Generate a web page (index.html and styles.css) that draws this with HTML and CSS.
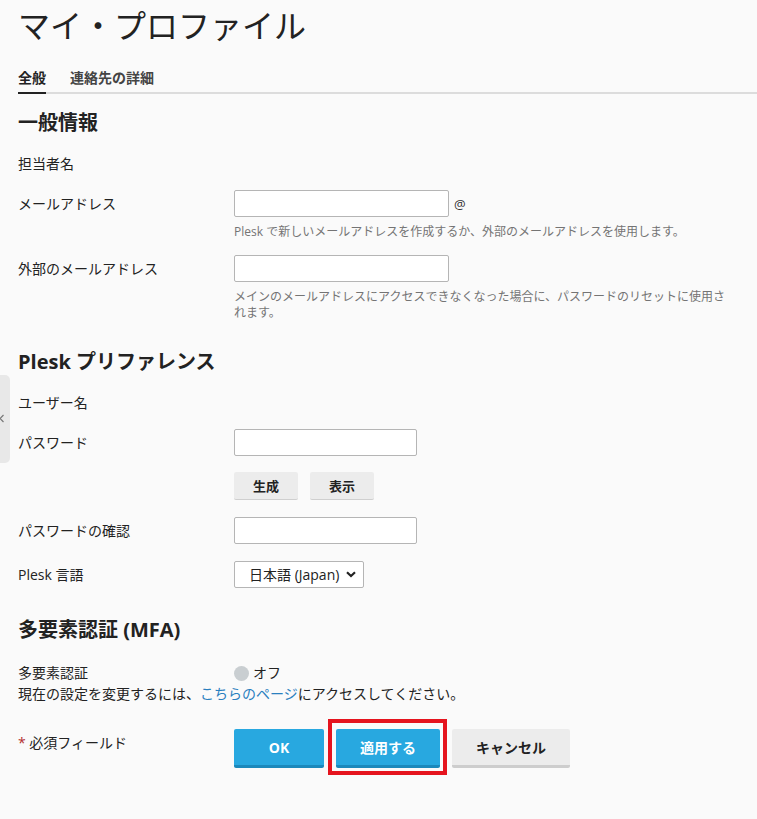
FILE: index.html
```html
<!DOCTYPE html>
<html lang="ja">
<head>
  <meta charset="UTF-8" />
  <meta name="viewport" content="width=device-width, initial-scale=1.0"/>
  <title>マイ・プロファイル</title>
  <link rel="stylesheet" href="styles.css">
</head>
<body>
  <!-- サイドバーのつまみ -->
  <div class="side-handle">
    <svg class="handle-arrow" width="6" height="9" viewBox="0 0 6 9">
      <path d="M4.5 1 L1 4.5 L4.5 8" fill="none" stroke="#777" stroke-width="1.2"/>
    </svg>
  </div>

  <div class="page">
    <h1 class="page-title">マイ・プロファイル</h1>

    <div class="tabs">
      <span class="tab active">全般</span>
      <span class="tab">連絡先の詳細</span>
    </div>

    <h2 class="section-title first">一般情報</h2>

    <div class="row text-row">
      <div class="label">担当者名</div>
      <div class="field"></div>
    </div>

    <div class="row">
      <div class="label">メールアドレス</div>
      <div class="field">
        <div class="inline">
          <input type="text" class="input wide">
          <span class="at">@</span>
        </div>
        <div class="hint">Plesk で新しいメールアドレスを作成するか、外部のメールアドレスを使用します。</div>
      </div>
    </div>

    <div class="row after-hint">
      <div class="label">外部のメールアドレス</div>
      <div class="field">
        <input type="text" class="input wide">
        <div class="hint">メインのメールアドレスにアクセスできなくなった場合に、パスワードのリセットに使用されます。</div>
      </div>
    </div>

    <h2 class="section-title">Plesk プリファレンス</h2>

    <div class="row text-row">
      <div class="label">ユーザー名</div>
      <div class="field"></div>
    </div>

    <div class="row">
      <div class="label">パスワード</div>
      <div class="field">
        <input type="password" class="input">
        <div class="small-buttons">
          <button class="btn-small">生成</button>
          <button class="btn-small">表示</button>
        </div>
      </div>
    </div>

    <div class="row">
      <div class="label">パスワードの確認</div>
      <div class="field">
        <input type="password" class="input">
      </div>
    </div>

    <div class="row">
      <div class="label">Plesk 言語</div>
      <div class="field">
        <div class="select-wrap">
          <select class="select">
            <option>日本語 (Japan)</option>
          </select>
          <svg class="chevron" width="10" height="7" viewBox="0 0 10 7">
            <path d="M1 1.2 L5 5 L9 1.2" fill="none" stroke="#222" stroke-width="2.2"/>
          </svg>
        </div>
      </div>
    </div>

    <h2 class="section-title mfa">多要素認証 (MFA)</h2>

    <div class="row text-row">
      <div class="label">多要素認証</div>
      <div class="field status">
        <span class="dot"></span>オフ
      </div>
    </div>
    <p class="note">現在の設定を変更するには、<a href="#" class="link">こちらのページ</a>にアクセスしてください。</p>

    <div class="row actions">
      <div class="label"><span class="req">*</span> 必須フィールド</div>
      <div class="field buttons">
        <button class="btn primary">OK</button>
        <span class="marked"><button class="btn primary">適用する</button></span>
        <button class="btn">キャンセル</button>
      </div>
    </div>
  </div>
</body>
</html>
```

FILE: styles.css
```css
body {
  margin: 0;
  padding: 0;
  background: #fafafa;
  color: #222;
  font-family: 'Open Sans', 'Noto Sans CJK JP', sans-serif;
  font-size: 14px;
}

.page {
  padding: 0 0 48px 18px;
}

.side-handle {
  position: absolute;
  left: 0;
  top: 375px;
  width: 10px;
  height: 88px;
  background: #e8e8e8;
  border-radius: 0 5px 5px 0;
}

.handle-arrow {
  position: absolute;
  left: -1px;
  top: 39px;
}

.page-title {
  margin: 0;
  padding-top: 6px;
  font-size: 32px;
  line-height: 40px;
  font-weight: normal;
  color: #222;
}

/* タブ */
.tabs {
  display: flex;
  gap: 24px;
  margin-top: 22px;
  border-bottom: 2px solid #dcdcdc;
}

.tab {
  font-size: 14px;
  line-height: 20px;
  font-weight: bold;
  color: #444;
  padding-bottom: 4px;
  margin-bottom: -2px;
  border-bottom: 2px solid transparent;
}

.tab.active {
  color: #222;
  border-bottom-color: #222;
}

.section-title {
  margin: 27px 0 0;
  font-size: 20px;
  line-height: 28px;
  font-weight: bold;
  color: #222;
}

.section-title.first {
  margin-top: 15px;
}

.section-title.mfa {
  margin-top: 28px;
}

/* フォーム行 */
.row {
  display: grid;
  grid-template-columns: 216px 1fr;
  margin-top: 17px;
}

.row.after-hint {
  margin-top: 15px;
}

.label {
  line-height: 27px;
  color: #222;
}

.text-row .label {
  line-height: 20px;
}

.section-title + .row {
  margin-top: 17px;
}

.section-title + .text-row + .row {
  margin-top: 16px;
}

.section-title.mfa + .text-row {
  margin-top: 19px;
}

.inline {
  display: flex;
  align-items: center;
  gap: 5px;
}

.input {
  display: block;
  box-sizing: border-box;
  width: 183px;
  height: 27px;
  margin: 0;
  border: 1px solid #b5b5b5;
  border-radius: 2px;
  background: #fff;
  font: inherit;
}

.input.wide {
  width: 215px;
}

.at {
  font-size: 13px;
  color: #333;
}

.hint {
  max-width: 497px;
  margin-top: 7px;
  font-size: 12px;
  line-height: 16px;
  color: #747474;
}

.small-buttons {
  display: flex;
  gap: 12px;
  margin-top: 16px;
}

.btn-small {
  width: 64px;
  height: 28px;
  border: 0;
  border-bottom: 1px solid #cfcfcf;
  border-radius: 2px;
  background: #ececec;
  font-family: inherit;
  font-size: 13px;
  font-weight: bold;
  color: #222;
}

.select-wrap {
  position: relative;
  width: 130px;
}

.select {
  display: block;
  box-sizing: border-box;
  width: 130px;
  height: 27px;
  margin: 0;
  padding: 0 0 0 14px;
  border: 1px solid #b5b5b5;
  border-radius: 2px;
  background: #fff;
  font: inherit;
  color: #222;
  appearance: none;
  -webkit-appearance: none;
}

.chevron {
  position: absolute;
  right: 8px;
  top: 10px;
  pointer-events: none;
}

.status {
  display: flex;
  align-items: center;
  line-height: 20px;
}

.dot {
  display: inline-block;
  width: 15px;
  height: 15px;
  border-radius: 50%;
  background: #c9ced1;
  margin-right: 4px;
}

.note {
  margin: 1px 0 0;
  line-height: 20px;
}

.link {
  color: #2a80bf;
  text-decoration: none;
}

.row.actions {
  margin-top: 25px;
}

.actions .label {
  line-height: 20px;
  padding-top: 4px;
}

.req {
  color: #b2302f;
}

.buttons {
  display: flex;
  align-items: flex-start;
  gap: 12px;
}

.btn {
  display: block;
  min-width: 90px;
  height: 39px;
  margin: 0;
  padding: 0 24px;
  border: 0;
  border-bottom: 3px solid #cdcdcd;
  border-radius: 2px;
  background: #ececec;
  font-family: inherit;
  font-size: 14px;
  font-weight: bold;
  color: #222;
}

.btn.primary {
  background: #28a8e0;
  border-bottom-color: #1b88bb;
  color: #fff;
}

/* 赤い強調枠 */
.marked {
  position: relative;
  display: block;
}

.marked::after {
  content: "";
  position: absolute;
  top: -10px;
  right: -7px;
  bottom: -7px;
  left: -8px;
  border: 4px solid #e5141e;
  pointer-events: none;
}
```
